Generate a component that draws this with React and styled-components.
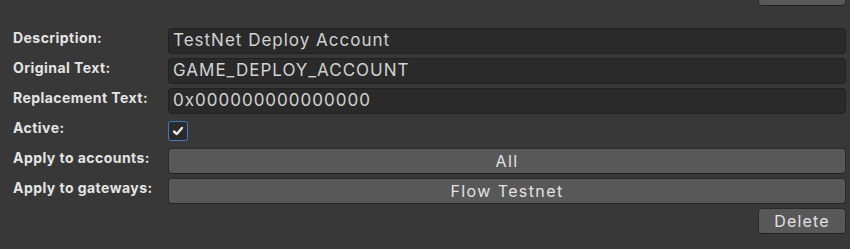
import React from 'react';
import styled, {createGlobalStyle} from 'styled-components';

const GlobalStyle = createGlobalStyle`
    html, body {
        margin: 0;
        padding: 0;
        background: #383838;
    }
    body {
        font-family: Inter, "Noto Sans", sans-serif;
        overflow: hidden;
    }
`

const Panel = styled.section`
    width: 850px;
    height: 249px;
    overflow: hidden;
    background: #383838;
    padding: 0 4px 0 13px;
    box-sizing: border-box;
    display: flex;
    flex-direction: column;
`

const ActionRow = styled.div`
    display: flex;
    justify-content: flex-end;
    margin-top: ${({ offset }) => offset || 0}px;
`

const SmallButton = styled.button`
    width: 88px;
    height: 26px;
    border-radius: 4px;
    border: 1px solid #2b2b2b;
    border-bottom-color: #232323;
    background: #585858;
    color: #e2e2e2;
    font-family: Inter, sans-serif;
    font-size: 16px;
    letter-spacing: 1.2px;
    padding: 0;
`

const FieldList = styled.ul`
    list-style: none;
    margin: 22px 0 0 0;
    padding: 0;
    display: flex;
    flex-direction: column;
    gap: 4px;
`

const FieldRow = styled.li`
    display: grid;
    grid-template-columns: 155px 1fr;
    align-items: start;
    min-height: 26px;
`

const Label = styled.div`
    font-size: 14px;
    font-weight: 700;
    letter-spacing: 0.45px;
    color: #e4e4e4;
    line-height: 18px;
    padding-top: 1px;
    white-space: nowrap;
`

const TextField = styled.div`
    height: 26px;
    box-sizing: border-box;
    border: 1px solid #212121;
    border-radius: 4px;
    background: #2a2a2a;
    color: #d2d2d2;
    font-size: 17px;
    letter-spacing: 1px;
    line-height: 23px;
    padding: 0 4px;
    white-space: nowrap;
`

const CheckBox = styled.div`
    width: 20px;
    height: 20px;
    box-sizing: border-box;
    margin-top: 3px;
    border: 1px solid #3c7bc2;
    border-radius: 3px;
    background: #2a2a2a;
    display: flex;
    align-items: center;
    justify-content: center;
`

const WideButton = styled.div`
    height: 26px;
    box-sizing: border-box;
    border: 1px solid #2b2b2b;
    border-bottom-color: #232323;
    border-radius: 4px;
    background: #585858;
    color: #e2e2e2;
    font-size: 16px;
    letter-spacing: 1.4px;
    line-height: 24px;
    text-align: center;
`

const fields = [
    {label: 'Description:', value: 'TestNet Deploy Account'},
    {label: 'Original Text:', value: 'GAME_DEPLOY_ACCOUNT'},
    {label: 'Replacement Text:', value: '0x000000000000000'},
]

const App = () => {
    return <React.Fragment>
        <GlobalStyle />
        <Panel>
            <ActionRow offset={-20}>
                <SmallButton>Add</SmallButton>
            </ActionRow>

            <FieldList>
                {fields.map(f => (
                    <FieldRow key={f.label}>
                        <Label>{f.label}</Label>
                        <TextField>{f.value}</TextField>
                    </FieldRow>
                ))}
                <FieldRow>
                    <Label>Active:</Label>
                    <CheckBox>
                        <svg width="14" height="14" viewBox="0 0 14 14">
                            <path d="M3 7.5 L5.8 10 L11 4" fill="none" stroke="#e8e8e8" strokeWidth="2.4" strokeLinecap="round" strokeLinejoin="round"/>
                        </svg>
                    </CheckBox>
                </FieldRow>
                <FieldRow>
                    <Label>Apply to accounts:</Label>
                    <WideButton>All</WideButton>
                </FieldRow>
                <FieldRow>
                    <Label>Apply to gateways:</Label>
                    <WideButton>Flow Testnet</WideButton>
                </FieldRow>
            </FieldList>

            <ActionRow offset={4}>
                <SmallButton>Delete</SmallButton>
            </ActionRow>
        </Panel>
    </React.Fragment>
}

export default App;
